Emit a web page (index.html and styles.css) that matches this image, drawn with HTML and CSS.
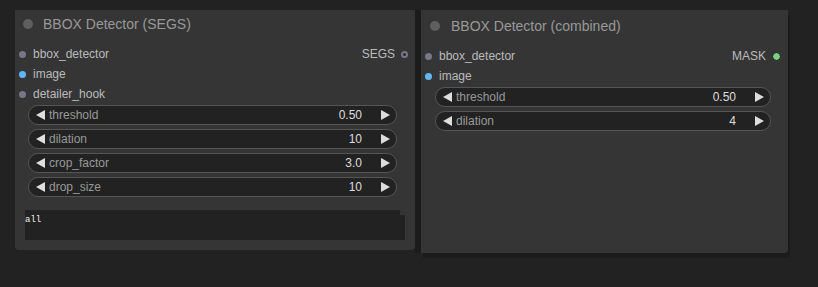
FILE: index.html
```html
<!DOCTYPE html>
<html lang="en">
<head>
    <meta charset="UTF-8">
    <meta name="viewport" content="width=device-width, initial-scale=1.0">
    <title>BBOX Detector Nodes</title>
    <link rel="stylesheet" href="styles.css">
</head>
<body>
    <div class="canvas">
        <div class="node node-segs">
            <div class="node-title"><span class="title-dot"></span>BBOX Detector (SEGS)</div>
            <div class="slots">
                <div class="slot-row">
                    <span class="slot-in"><i class="dot dot-detector"></i>bbox_detector</span>
                    <span class="slot-out">SEGS<i class="dot dot-segs"></i></span>
                </div>
                <div class="slot-row">
                    <span class="slot-in"><i class="dot dot-image"></i>image</span>
                </div>
                <div class="slot-row">
                    <span class="slot-in"><i class="dot dot-detector"></i>detailer_hook</span>
                </div>
            </div>
            <div class="widgets">
                <div class="widget"><span class="arrow arrow-left"></span><span class="w-label">threshold</span><span class="w-value">0.50</span><span class="arrow arrow-right"></span></div>
                <div class="widget"><span class="arrow arrow-left"></span><span class="w-label">dilation</span><span class="w-value">10</span><span class="arrow arrow-right"></span></div>
                <div class="widget"><span class="arrow arrow-left"></span><span class="w-label">crop_factor</span><span class="w-value">3.0</span><span class="arrow arrow-right"></span></div>
                <div class="widget"><span class="arrow arrow-left"></span><span class="w-label">drop_size</span><span class="w-value">10</span><span class="arrow arrow-right"></span></div>
            </div>
            <div class="text-box">all</div>
        </div>

        <div class="node node-combined">
            <div class="node-title"><span class="title-dot"></span>BBOX Detector (combined)</div>
            <div class="slots">
                <div class="slot-row">
                    <span class="slot-in"><i class="dot dot-detector"></i>bbox_detector</span>
                    <span class="slot-out">MASK<i class="dot dot-mask"></i></span>
                </div>
                <div class="slot-row">
                    <span class="slot-in"><i class="dot dot-image"></i>image</span>
                </div>
            </div>
            <div class="widgets">
                <div class="widget"><span class="arrow arrow-left"></span><span class="w-label">threshold</span><span class="w-value">0.50</span><span class="arrow arrow-right"></span></div>
                <div class="widget"><span class="arrow arrow-left"></span><span class="w-label">dilation</span><span class="w-value">4</span><span class="arrow arrow-right"></span></div>
            </div>
        </div>
    </div>
</body>
</html>
```

FILE: styles.css
```css
body {
    margin: 0;
    padding: 0;
    background: #222;
    font-family: "Liberation Sans", Arial, sans-serif;
    overflow: hidden;
}
.canvas {
    position: relative;
    width: 818px;
    height: 287px;
}
.node {
    position: absolute;
    top: 10px;
    background: #353535;
    display: flex;
    flex-direction: column;
    box-sizing: border-box;
}
.node-segs {
    left: 15px;
    width: 400px;
    height: 240px;
    border-radius: 0 0 4px 4px;
}
.node-combined {
    left: 421px;
    width: 367px;
    height: 243px;
    border-radius: 0 0 4px 0;
    box-shadow: -6px 0 0 #1c1c1c, 2px 5px 0 #1c1c1c;
}
.node-title {
    display: flex;
    align-items: center;
    height: 28px;
    padding-left: 8px;
    color: #999;
    font-size: 14px;
}
.node-combined .node-title {
    height: 32px;
    padding-left: 9px;
}
.title-dot {
    width: 10px;
    height: 10px;
    border-radius: 50%;
    background: #5f5f5f;
    margin-right: 10px;
}
.node-combined .title-dot {
    margin-right: 11px;
}
.slots {
    padding-top: 6px;
}
.node-combined .slots {
    padding-top: 4px;
}
.slot-row {
    display: flex;
    align-items: center;
    justify-content: space-between;
    height: 20px;
    font-size: 12px;
    color: #bbb;
}
.slot-in {
    display: flex;
    align-items: center;
    padding-left: 4px;
}
.slot-out {
    display: flex;
    align-items: center;
    padding-right: 7px;
}
.dot {
    display: inline-block;
    width: 7px;
    height: 7px;
    border-radius: 50%;
    box-sizing: border-box;
}
.slot-in .dot {
    margin-right: 7px;
}
.slot-out .dot {
    margin-left: 6px;
}
.dot-detector {
    background: #77778a;
}
.dot-image {
    background: #64b5f6;
}
.dot-segs {
    background: #2a2a2a;
    border: 2px solid #77778a;
}
.dot-mask {
    width: 9px;
    height: 9px;
    background: #7ccf7c;
    border: 1px solid #1a1a1a;
}
.widgets {
    display: flex;
    flex-direction: column;
    gap: 4px;
    margin: 1px 18px 0 13px;
}
.node-combined .widgets {
    margin: 1px 17px 0 14px;
}
.widget {
    display: flex;
    align-items: center;
    height: 20px;
    box-sizing: border-box;
    padding: 0 6px 0 7px;
    background: #222;
    border: 1px solid #555;
    border-radius: 10px;
    font-size: 12px;
}
.arrow {
    width: 0;
    height: 0;
    border-top: 5px solid transparent;
    border-bottom: 5px solid transparent;
}
.arrow-left {
    border-right: 9px solid #ddd;
}
.arrow-right {
    border-left: 9px solid #ddd;
}
.w-label {
    margin-left: 4px;
    color: #999;
    flex: 1;
}
.w-value {
    color: #ddd;
    margin-right: 19px;
}
.text-box {
    position: relative;
    margin: 13px 10px 0 10px;
    height: 30px;
    background: #222;
    color: #eee;
    font-family: "Liberation Mono", "Courier New", monospace;
    font-size: 9px;
    line-height: 20px;
}
.text-box::after {
    content: "";
    position: absolute;
    top: 0;
    right: 0;
    width: 5px;
    height: 5px;
    background: #353535;
}
```
